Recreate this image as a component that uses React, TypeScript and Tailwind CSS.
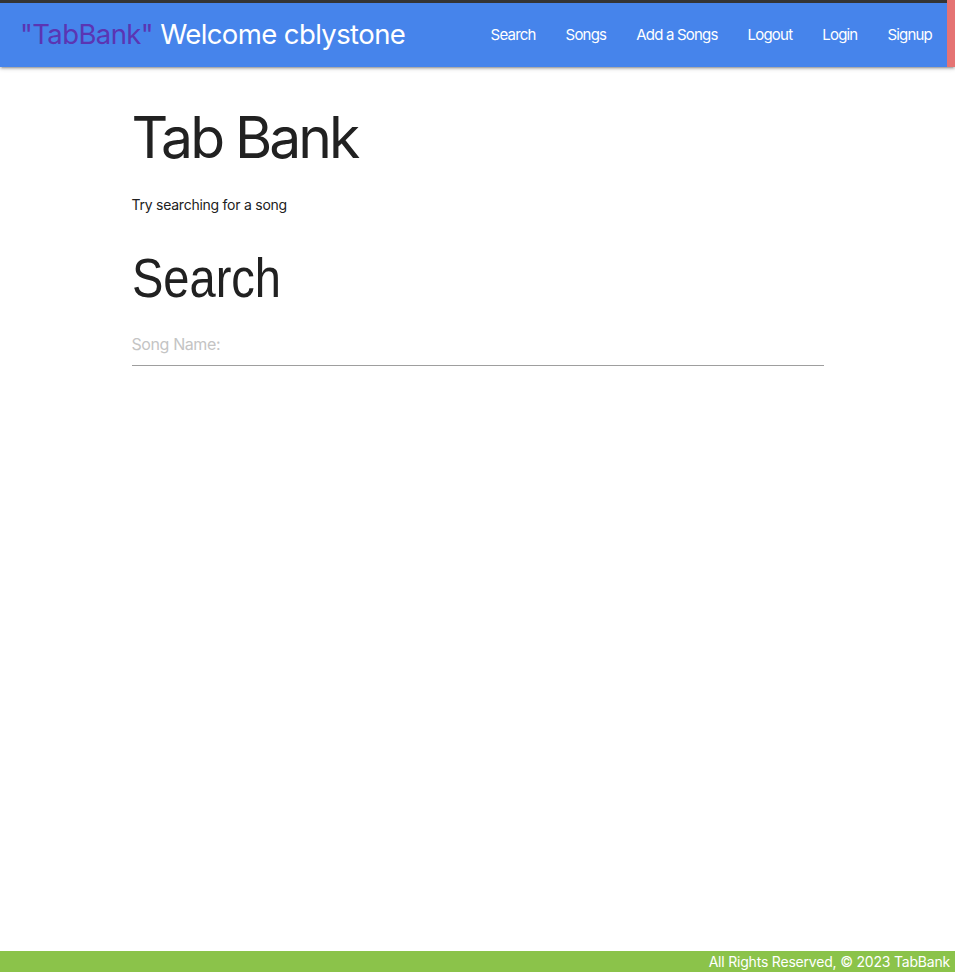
import { useState } from "react"

const links = ["Search", "Songs", "Add a Songs", "Logout", "Login", "Signup"]

export default function App() {
  const [query, setQuery] = useState("")

  return (
    <div className="flex min-h-screen flex-col bg-white font-['Inter',sans-serif] text-[#212121]">
      <nav className="relative z-10 flex h-[67px] border-t-[3px] border-[#343434] bg-[#4684eb] text-white shadow-[0_2px_2px_0_rgba(0,0,0,0.14),0_3px_1px_-2px_rgba(0,0,0,0.12),0_1px_5px_0_rgba(0,0,0,0.2)]">
        <div className="flex flex-1 items-center justify-between pl-5">
          <a href="#" className="text-[27.5px] leading-none tracking-[-0.6px]">
            <span className="text-[#5b35b3]">"TabBank"</span> Welcome cblystone
          </a>
          <ul className="flex items-center">
            {links.map((l) => (
              <li key={l}>
                <a href="#" className="block px-[15px] text-[15px] leading-[64px] tracking-[-0.8px]">
                  {l}
                </a>
              </li>
            ))}
          </ul>
        </div>
        <div className="-mt-[3px] w-2 bg-[#e57373]" />
      </nav>

      <main className="mx-auto w-[692px] flex-1">
        <h1 className="mt-[40px] text-[57px] leading-[1.1] tracking-[-3px]">Tab Bank</h1>
        <p className="mt-[24px] text-sm leading-[21px] tracking-[-0.25px]">Try searching for a song</p>
        <h2 className="mt-[33px] origin-left scale-x-[0.855] font-['Liberation_Sans',sans-serif] text-[55px] leading-[1.1]">
          Search
        </h2>
        <input
          value={query}
          onChange={(e) => setQuery(e.target.value)}
          placeholder="Song Name:"
          className="mt-[10px] h-12 w-full border-b border-[#9e9e9e] bg-transparent pt-1 text-base tracking-[-0.4px] outline-none placeholder:text-[#c4c4c4]"
        />
      </main>

      <footer className="h-[21px] bg-[#8bc34a] pr-[5px] text-right text-sm leading-[21px] tracking-[-0.2px] text-white">
        All Rights Reserved, © 2023 TabBank
      </footer>
    </div>
  )
}
